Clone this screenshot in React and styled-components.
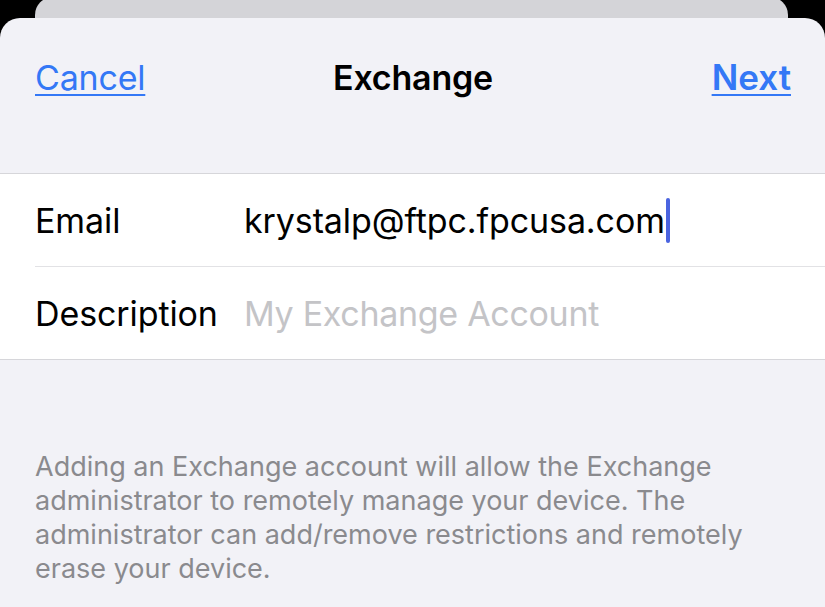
import React from "react";
import styled, { createGlobalStyle } from "styled-components";

const Global = createGlobalStyle`
  html, body { margin: 0; padding: 0; background: #000; }
  * { box-sizing: border-box; }
`;

const Screen = styled.div`
  width: 825px;
  height: 607px;
  overflow: hidden;
  background: #000;
  display: flex;
  flex-direction: column;
  font-family: Inter, "Noto Sans", sans-serif;
`;

const BackCard = styled.div`
  flex: none;
  margin: -3px 37px 0 35px;
  height: 21px;
  background: #d4d4d8;
  border-radius: 18px 18px 0 0;
`;

const Sheet = styled.div`
  flex: 1;
  background: #f2f2f7;
  border-radius: 20px 20px 0 0;
  display: flex;
  flex-direction: column;
`;

const NavBar = styled.div`
  height: 118px;
  padding: 0 34px 0 35px;
  display: grid;
  grid-template-columns: 1fr auto 1fr;
  align-items: center;
`;

const NavButton = styled.span`
  justify-self: ${(p) => (p.$end ? "end" : "start")};
  color: #3478f6;
  font-size: ${(p) => (p.$bold ? 35 : 34)}px;
  font-weight: ${(p) => (p.$bold ? 600 : 400)};
  letter-spacing: ${(p) => (p.$bold ? 0 : -0.2)}px;
  text-decoration: underline;
  text-decoration-thickness: 2px;
  text-underline-offset: 4px;
`;

const Title = styled.span`
  font-size: 34px;
  font-weight: 600;
  color: #000;
  letter-spacing: -0.2px;
`;

const Group = styled.div`
  margin-top: 37px;
  background: #fff;
  border-top: 1px solid #d6d6da;
  border-bottom: 1px solid #d6d6da;
`;

const Row = styled.div`
  height: ${(p) => (p.$last ? 92 : 93)}px;
  margin-left: 35px;
  display: flex;
  align-items: center;
  border-bottom: ${(p) => (p.$last ? "none" : "1px solid #e2e2e5")};
`;

const Label = styled.span`
  width: 209px;
  flex: none;
  font-size: 34px;
  color: #000;
  letter-spacing: -0.1px;
`;

const Value = styled.span`
  font-size: 34px;
  color: ${(p) => (p.$placeholder ? "#c4c4c7" : "#000")};
  letter-spacing: ${(p) => (p.$placeholder ? -0.3 : -0.1)}px;
  display: flex;
  align-items: center;
`;

const Caret = styled.span`
  display: inline-block;
  width: 4px;
  height: 45px;
  margin-left: 1px;
  border-radius: 2px;
  background: #4a64e0;
`;

const Footer = styled.p`
  margin: 90px 0 0;
  padding: 0 35px;
  font-size: 27px;
  line-height: 34px;
  color: #8a8a8e;
  letter-spacing: 0;
`;

export default function App() {
  return (
    <>
      <Global />
      <Screen>
        <BackCard />
        <Sheet>
          <NavBar>
            <NavButton>Cancel</NavButton>
            <Title>Exchange</Title>
            <NavButton $end $bold>Next</NavButton>
          </NavBar>
          <Group>
            <Row>
              <Label>Email</Label>
              <Value>
                krystalp@ftpc.fpcusa.com
                <Caret />
              </Value>
            </Row>
            <Row $last>
              <Label>Description</Label>
              <Value $placeholder>My Exchange Account</Value>
            </Row>
          </Group>
          <Footer>
            Adding an Exchange account will allow the Exchange administrator to
            remotely manage your device. The administrator can add/remove
            restrictions and remotely erase your device.
          </Footer>
        </Sheet>
      </Screen>
    </>
  );
}
